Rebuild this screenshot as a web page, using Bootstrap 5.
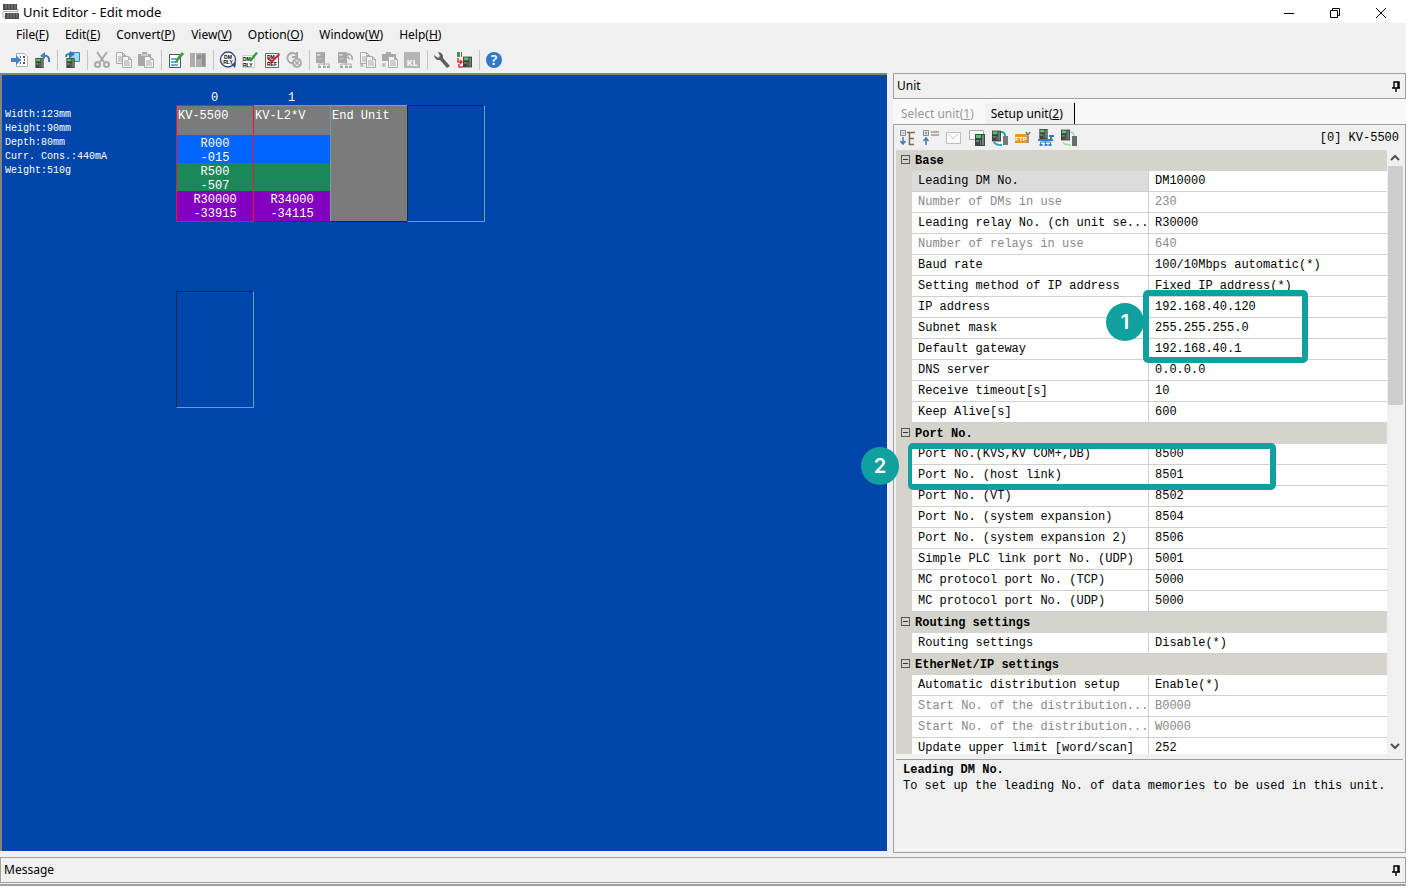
<!DOCTYPE html>
<html lang="en">
<head>
<meta charset="utf-8">
<meta name="viewport" content="width=device-width, initial-scale=1">
<title>Unit Editor - Edit mode</title>
<link href="https://cdn.jsdelivr.net/npm/bootstrap@5.3.0/dist/css/bootstrap.min.css" rel="stylesheet">
<style>
  :root { --face:#f0f0f0; --line:#a0a0a0; --group:#d4d4cc; --teal:#10a09f; --canvas:#0046aa; }
  body { font-family:"Noto Sans","Open Sans",sans-serif; font-size:12px; line-height:16px; color:#000; background:#fff; }
  button { color:inherit; }
  .mono { font-family:"Liberation Mono",monospace; font-size:12px; line-height:14px; }
  .app { padding:0 4px 2px 0; }
  .title-bar { height:23px; font-size:13px; }
  .app-icon { margin:0 3px 0 2px; }
  .win-btns { margin-right:2px; }
  .win-btn { width:46px; height:22px; border:0; background:none; padding:0; }
  .menu-bar { height:23px; background:var(--face); padding-left:8px; }
  .menu-bar a { color:#000; text-decoration:none; padding:0 8px; }
  .tool-bar { height:27px; background:var(--face); padding-left:9px; }
  .tool { width:22px; height:22px; border:0; background:none; padding:0; display:flex; align-items:center; justify-content:center; }
  .tool:disabled { opacity:1; color:#a8a8a8; }
  .tool-sep { width:8px; height:20px; display:flex; justify-content:center; }
  .tool-sep::before { content:""; width:1px; background:#c4c4c4; }
  .workspace { background:var(--face); gap:6px; }
  .unit-canvas { background:var(--canvas); border-left:2px solid #848484; border-top:2px solid #848484; color:#fff; padding:16px 0 0 3px; margin-bottom:2px; }
  .unit-info { width:171px; font-size:10px; padding-top:17px; }
  .slot { width:77px; }
  .slot-no { height:14px; text-align:center; }
  .unit { height:117px; width:78px; border:1px solid; border-color:#7a9a94 #7a9a94 #333 #7a9a94; }
  .unit-name { height:29px; padding:3px 0 0 1px; background:#7b7b7b; }
  .unit.end { background:#7b7b7b; border-color:#999 #222 #222 #6fa0a0; }
  .unit.vacant { border-color:#142a4a #5fa5b5 #5fa5b5 #142a4a; }
  .unit.picked { border-color:#f01038; position:relative; z-index:1; }
  .addr { height:28px; padding-top:2px; text-align:center; }
  .addr-in { background:#0066ff; } .addr-out { background:#1b8858; } .addr-mem { background:#8400c0; height:30px; }
  .gap-rack { margin-top:69px; margin-left:171px; }
  .side { width:513px; }
  .caption { height:26px; border:1px solid var(--line); background:var(--face); padding:0 4px 0 3px; font-size:12px; }
  .caption button { border:0; background:none; padding:0; width:9px; height:12px; display:flex; }
  .tab-strip { height:26px; background:#f8f8f8; border-bottom:1px solid var(--line); }
  .tab-strip button { border:0; background:none; height:21px; margin-top:4px; padding:0 11px 0 6px; line-height:16px; }
  .tab-strip button:first-child { color:#999; padding-left:8px; }
  .tab-strip button.active { background:var(--face); border-right:1px solid #000; }
  .side-body { border:1px solid var(--line); border-top:0; padding:0 2px 2px; }
  .side-tools { height:25px; padding:0 4px 0 0; }
  .side-tools .tool { width:23px; }
  .grid-wrap { height:604px; }
  .grid-clip { overflow:hidden; height:100%; min-width:0; background:#fff; }
  .prop-grid { width:100%; table-layout:fixed; border-collapse:separate; border-spacing:0; }
  .prop-grid tr { height:21px; }
  .prop-grid td, .prop-grid tbody th { height:21px; padding:0 0 0 6px; border-bottom:1px solid #cfcfcf; font-weight:400; white-space:nowrap; overflow:hidden; }
  .prop-grid td { border-left:1px solid #cfcfcf; background:#fff; }
  .prop-grid tbody th.gutter { background:var(--group); border:0; padding:0; }
  .prop-grid tbody .group th { background:var(--group); border:0; font-weight:700; padding:0 0 0 3px; }
  .prop-grid tbody .group th.gutter { padding:0 0 0 5px; }
  .prop-grid .off { color:#888; }
  .prop-grid .current th:nth-child(2) { background:#dcdcdc; }
  .fold { width:9px; height:9px; border:1px solid #555; background:none; padding:0; display:flex; align-items:center; justify-content:center; margin-bottom:2px; }
  .fold::before { content:""; width:5px; height:1px; background:#333; }
  .scroll-track { width:16px; background:var(--face); }
  .scroll-track button { border:0; background:none; padding:0; height:16px; display:flex; align-items:center; justify-content:center; }
  .scroll-thumb { height:239px; margin-left:1px; background:#cdcdcd; }
  .help-pane { margin-top:5px; border-top:1px solid var(--line); border-bottom:1px solid #fff; padding:2px 7px; line-height:16px; }
  .mark-box { position:absolute; border:6px solid var(--teal); border-radius:5px; pointer-events:none; }
  .mark-ip { left:247px; top:140px; width:165px; height:73px; }
  .mark-port { left:12px; top:293px; width:368px; height:47px; border-left-width:4px; }
  .mark-no { position:absolute; width:38px; height:38px; border-radius:50%; background:var(--teal); color:#fff; font:600 20px/38px Inter,sans-serif; text-align:center; }
  .no-one { left:210px; top:153px; } .no-two { left:-35px; top:297px; }
  .foot { background:var(--face); padding:4px 0 1px; border-bottom:2px solid var(--line); }
</style>
</head>
<body>
<svg class="d-none" aria-hidden="true">
  <symbol id="pin" viewBox="0 0 9 12"><path d="M2 2h5v6H2zM0 8h8M4 8v4M6 2v6" fill="none" stroke="#000" stroke-width="1.4"/></symbol>
  <symbol id="plc" viewBox="0 0 10 12"><path d="M0 0h10v12H0z" fill="#3d4541"/><path d="M1 1h5v3H1z" fill="#4ecb62"/><path d="M1 6h3v2H1zM5 6h1v5H5zM7 1h2v10H7z" fill="#778078"/></symbol>
  <symbol id="plc-off" viewBox="0 0 10 12"><path d="M0 0h10v12H0z" fill="#a6a6a6"/><path d="M1 2h4v2H1zM2 7h5v1H2z" fill="#d8d8d8"/></symbol>
  <symbol id="sheet" viewBox="0 0 10 12"><path d="M.5.5h6l3 3v8h-9zM6.500 .5v3h3M2 5h5M2 7h6M2 9h6" fill="#f4f4f4" stroke="currentColor"/></symbol>
  <symbol id="tree" viewBox="0 0 12 7"><path d="M6 0v3M1 6V3h10v3M6 3v3" fill="none" stroke="currentColor"/><path d="M0 5h3v2H0zM5 5h3v2H5zM9 5h3v2H9z" fill="currentColor"/></symbol>
</svg>

<div class="app d-flex flex-column vh-100 overflow-hidden">
  <header class="title-bar d-flex align-items-center">
    <svg width="18" height="17" viewBox="0 0 18 17" class="app-icon"><path d="M1 1h14v6H1zM3 10h14v6H3z" fill="#4b4b4b"/><path d="M4 1v5M7 1v5M10 1v5M13 1v5M6 10v5M9 10v5M12 10v5M15 10v5" stroke="#858585"/><path d="M15 6h1v3M1 9v5h2M1 8.500h15" fill="none" stroke="#aaa"/></svg>
    <span class="title-text">Unit Editor - Edit mode</span>
    <div class="win-btns ms-auto d-flex">
      <button class="win-btn" aria-label="Minimize"><svg width="12" height="12"><path d="M1 6.500h10" stroke="#000"/></svg></button>
      <button class="win-btn" aria-label="Restore"><svg width="12" height="12"><path d="M1.500 3.500h7v7h-7zM3.500 3V1.500h7v7H9" fill="none" stroke="#000"/></svg></button>
      <button class="win-btn" aria-label="Close"><svg width="12" height="12"><path d="M1 1l10 10M11 1L1 11" stroke="#000"/></svg></button>
    </div>
  </header>

  <nav class="menu-bar d-flex align-items-center" aria-label="Menu">
    <a href="#">File(<u>F</u>)</a><a href="#">Edit(<u>E</u>)</a><a href="#">Convert(<u>P</u>)</a><a href="#">View(<u>V</u>)</a><a href="#">Option(<u>O</u>)</a><a href="#">Window(<u>W</u>)</a><a href="#">Help(<u>H</u>)</a>
  </nav>

  <div class="tool-bar d-flex align-items-center" role="toolbar" aria-label="Tools">
    <button class="tool" aria-label="Import"><svg width="18" height="18"><path d="M5.500 2.500h8l3 3v10h-11z" fill="#fff" stroke="#b0b0b0"/><path d="M9 6h1M12 6h2M8 9h2M13 9h1M9 12h1M12 12h2" stroke="#555" stroke-width="2"/><path d="M0 7h5V4l5 5-5 5v-3H0z" fill="#4085c8"/></svg></button>
    <button class="tool" aria-label="Undo"><svg width="18" height="18"><use href="#plc" x="1" y="7" width="11" height="10"/><path d="M16 11c1-5-2-7-6-6" fill="none" stroke="#3d80b8" stroke-width="2"/><path d="M7 5l5-4v7z" fill="#3d80b8"/></svg></button>
    <span class="tool-sep"></span>
    <button class="tool" aria-label="Read unit"><svg width="18" height="18"><path d="M6.500 1.500h10v9h-10z" fill="#9bdcf8" stroke="#4a82a8"/><use href="#plc" x="2" y="7" width="11" height="10"/><path d="M3 6c0-3 2-3 5-3" fill="none" stroke="#2d76b8" stroke-width="2"/><path d="M7 0l5 3-5 4z" fill="#2d76b8"/></svg></button>
    <span class="tool-sep"></span>
    <button class="tool" disabled aria-label="Cut"><svg width="18" height="18" fill="none" stroke="currentColor" stroke-width="2"><path d="M4 1l7 10M14 1L7 11"/><circle cx="4.500" cy="13.500" r="2.500"/><circle cx="13.500" cy="13.500" r="2.500"/></svg></button>
    <button class="tool" disabled aria-label="Copy"><svg width="18" height="18"><use href="#sheet" x="1" y="1" width="10" height="12"/><use href="#sheet" x="7" y="5" width="10" height="12"/></svg></button>
    <button class="tool" disabled aria-label="Paste"><svg width="18" height="18"><path d="M1 3h13v12H1zM5 1h5v4H5z" fill="currentColor"/><path d="M4 4h7" stroke="#eee"/><use href="#sheet" x="7" y="5" width="10" height="12"/></svg></button>
    <span class="tool-sep"></span>
    <button class="tool" aria-label="Edit"><svg width="18" height="18"><path d="M2.500 3.500h11v13h-11z" fill="#fff" stroke="#456"/><path d="M4 8h5M4 11h7M4 14h7" stroke="#4c86c8" stroke-width="1.500"/><path d="M8 12l1-4 6-7 2 2-6 7z" fill="#35a23a"/></svg></button>
    <button class="tool" disabled aria-label="Unit"><svg width="18" height="18"><path d="M1 2h5v14H1zM7 2h10v14H7z" fill="#adadad"/><path d="M8 4h4v4H8zM13 3h3v12h-3z" fill="#8e8e8e"/></svg></button>
    <span class="tool-sep"></span>
    <button class="tool" aria-label="DM relay"><svg width="18" height="18"><circle cx="9" cy="8.500" r="7.500" fill="#fff" stroke="#344a88" stroke-width="1.400"/><path d="M12 13l5-1-1 5z" fill="#344a88"/><text x="9" y="8" font-size="5" font-weight="700" text-anchor="middle" font-family="Liberation Sans">DM</text><text x="9" y="13" font-size="5" font-weight="700" text-anchor="middle" font-family="Liberation Sans">RLY</text></svg></button>
    <button class="tool" aria-label="Assign relay"><svg width="18" height="18"><path d="M1.500 4.500h12v12h-12z" fill="#fff" stroke="#ccc"/><text x="2" y="10" font-size="5" font-weight="700" font-family="Liberation Sans">DM</text><text x="2" y="16" font-size="5" font-weight="700" font-family="Liberation Sans">RLY</text><path d="M7 8l3 3 7-9-2-1-5 6-2-1z" fill="#2e9e3a"/></svg></button>
    <button class="tool" aria-label="Check"><svg width="18" height="18"><path d="M2.500 2.500h13v14h-13z" fill="#fff" stroke="#666"/><text x="4" y="8" font-size="5" font-weight="700" font-family="Liberation Sans">DM</text><text x="4" y="15" font-size="5" font-weight="700" font-family="Liberation Sans">REF</text><path d="M5 6l4 3 7-7 1 2-8 8-5-4z" fill="#d82038"/></svg></button>
    <button class="tool" disabled aria-label="Cancel"><svg width="18" height="18" fill="none" stroke="currentColor" stroke-width="2"><path d="M12 5a5 5 0 1 0-4 7M12 1v5H7"/><circle cx="12" cy="12" r="4" fill="#eee"/><path d="M10 10l4 4M14 10l-4 4" stroke-width="1.500"/></svg></button>
    <span class="tool-sep"></span>
    <button class="tool" disabled aria-label="Unit tree"><svg width="18" height="18"><use href="#plc-off" x="1" y="1" width="9" height="11"/><use href="#tree" x="3" y="10" width="12" height="7"/></svg></button>
    <button class="tool" disabled aria-label="Undo tree"><svg width="18" height="18"><use href="#plc-off" x="1" y="1" width="9" height="11"/><use href="#tree" x="3" y="10" width="12" height="7"/><path d="M9 5c4-3 7-1 6 4M12 2L9 5l4 3" fill="none" stroke="currentColor" stroke-width="1.500"/></svg></button>
    <button class="tool" disabled aria-label="Copy comments"><svg width="18" height="18"><use href="#sheet" x="1" y="1" width="10" height="12"/><use href="#sheet" x="7" y="5" width="10" height="12"/><text x="1" y="16" font-size="6" font-weight="700" fill="currentColor">K</text></svg></button>
    <button class="tool" disabled aria-label="Paste comments"><svg width="18" height="18"><path d="M1 3h14v7H1zM5 1h5v4H5z" fill="currentColor"/><use href="#sheet" x="7" y="5" width="10" height="12"/><text x="1" y="16" font-size="6" font-weight="700" fill="currentColor">K</text></svg></button>
    <button class="tool" disabled aria-label="KL"><svg width="18" height="18"><path d="M1 1h16v16H1z" fill="#b4b4b4"/><text x="9" y="15" font-size="9" font-weight="700" text-anchor="middle" fill="#fff">KL</text></svg></button>
    <span class="tool-sep"></span>
    <button class="tool" aria-label="Settings"><svg width="18" height="18"><path d="M1 4a5 5 0 0 0 6 5l7 8 3-2-7-8a5 5 0 0 0-5-6l2 4-2 2z" fill="#606060"/></svg></button>
    <button class="tool" aria-label="Transfer"><svg width="18" height="18"><path d="M2 1h3v5H2z" fill="#2c9c55"/><path d="M6 1h1v5H6z" fill="#d33"/><path d="M3 7v4h4M5 9l2 2-2 2M4 13v3h4" fill="none" stroke="#d9363c" stroke-width="1.500"/><use href="#plc" x="8" y="5" width="9" height="12"/></svg></button>
    <span class="tool-sep"></span>
    <button class="tool" aria-label="Help"><svg width="18" height="18"><circle cx="9" cy="9" r="8" fill="#3179c4"/><text x="9" y="14" font-size="14" font-weight="600" text-anchor="middle" fill="#fff" font-family="Noto Sans">?</text></svg></button>
  </div>

  <main class="workspace d-flex flex-grow-1">
    <section class="unit-canvas mono flex-grow-1">
      <div class="d-flex">
        <div class="unit-info mono">Width:123mm<br>Height:90mm<br>Depth:80mm<br>Curr. Cons.:440mA<br>Weight:510g</div>
        <div class="slot"><div class="slot-no">0</div>
          <div class="unit picked"><div class="unit-name">KV-5500</div><div class="addr addr-in">R000<br>-015</div><div class="addr addr-out">R500<br>-507</div><div class="addr addr-mem">R30000<br>-33915</div></div></div>
        <div class="slot"><div class="slot-no">1</div>
          <div class="unit"><div class="unit-name">KV-L2*V</div><div class="addr addr-in"></div><div class="addr addr-out"></div><div class="addr addr-mem">R34000<br>-34115</div></div></div>
        <div class="slot"><div class="slot-no"></div><div class="unit end"><div class="unit-name">End Unit</div></div></div>
        <div class="slot"><div class="slot-no"></div><div class="unit vacant"></div></div>
      </div>
      <div class="gap-rack"><div class="unit vacant"></div></div>
    </section>

    <aside class="side d-flex flex-column flex-shrink-0">
      <div class="caption d-flex align-items-center justify-content-between"><span>Unit</span><button aria-label="Auto hide"><svg width="9" height="12"><use href="#pin"/></svg></button></div>
      <div class="tab-strip d-flex" role="tablist">
        <button role="tab">Select unit(<u>1</u>)</button><button role="tab" class="active" aria-selected="true">Setup unit(<u>2</u>)</button>
      </div>
      <div class="side-body d-flex flex-column flex-grow-1">
        <div class="side-tools d-flex align-items-center">
          <button class="tool" aria-label="Expand all"><svg width="18" height="18" fill="none"><path d="M1.500 1.500h5v5h-5zM2.500 4h3" stroke="#888"/><path d="M8 3.500h8M10.500 4v12M10.500 9.500H15M10.500 15.500H15" stroke="#7b694c" stroke-width="1.500"/><path d="M4 8v7M1.500 12L4 15l2.500-3" stroke="#3e7eb5" stroke-width="1.500"/></svg></button>
          <button class="tool" aria-label="Collapse all"><svg width="18" height="18" fill="none"><path d="M1.500 1.500h5v5h-5zM2.500 4h3M4 2.500v3" stroke="#888"/><path d="M9 3h8M9 6h8" stroke="#7b694c"/><path d="M4 16V9M1.500 12L4 9l2.500 3" stroke="#3e7eb5" stroke-width="1.500"/></svg></button>
          <button class="tool" aria-label="Mail"><svg width="16" height="14"><path d="M.5 1.500h14v11H.5z" fill="#fafafa" stroke="#bbb"/><path d="M3 3l4 5 5-5" fill="none" stroke="#ccc"/></svg></button>
          <button class="tool" aria-label="Mail setup"><svg width="18" height="18"><path d="M1.500 1.500h14v9h-14z" fill="#fafafa" stroke="#aaa"/><use href="#plc" x="7" y="5" width="10" height="12"/></svg></button>
          <button class="tool" aria-label="Transfer setup"><svg width="18" height="18"><use href="#plc" x="1" y="1" width="9" height="12"/><path d="M10 3c3 0 4 1 4 4M3 13c1 3 4 3 8 3" fill="none" stroke="#22a5c0" stroke-width="2"/><path d="M12 7h5v9h-5z" fill="#77777c"/></svg></button>
          <button class="tool" aria-label="FTP setup"><svg width="18" height="18"><path d="M1 5h12v9H1z" fill="#e39a27"/><text x="7" y="12" font-size="6" font-weight="700" text-anchor="middle" fill="#fff" font-family="Liberation Sans">FTP</text><path d="M14 14V7M12 3l2 3 2-3" fill="none" stroke="#777" stroke-width="1.500"/></svg></button>
          <button class="tool" aria-label="Network setup"><svg width="18" height="18"><use href="#plc" x="2" y="0" width="9" height="10"/><g color="#367fbd"><use href="#tree" x="1" y="10" width="15" height="7"/></g><path d="M12 7h5M14 7v5M1 11h15" stroke="#367fbd" stroke-width="2"/></svg></button>
          <button class="tool" aria-label="Link setup"><svg width="18" height="18"><use href="#plc" x="1" y="0" width="9" height="12"/><path d="M10 3c3 0 4 1 4 4M3 13c1 3 4 3 8 3" fill="none" stroke="#a4dba0" stroke-width="1.500"/><path d="M12 7h5v10h-5z" fill="#66706b"/></svg></button>
          <span class="mono ms-auto">[0] KV-5500</span>
        </div>

        <div class="grid-wrap d-flex position-relative">
          <div class="grid-clip flex-grow-1">
            <table class="prop-grid mono">
              <colgroup><col style="width:16px"><col style="width:236px"><col></colgroup>
              <tbody>
                <tr class="group"><th class="gutter"><button class="fold" aria-label="Collapse Base"></button></th><th colspan="2">Base</th></tr>
                <tr class="current"><th class="gutter"></th><th scope="row">Leading DM No.</th><td>DM10000</td></tr>
                <tr class="off"><th class="gutter"></th><th scope="row">Number of DMs in use</th><td>230</td></tr>
                <tr><th class="gutter"></th><th scope="row">Leading relay No. (ch unit se...</th><td>R30000</td></tr>
                <tr class="off"><th class="gutter"></th><th scope="row">Number of relays in use</th><td>640</td></tr>
                <tr><th class="gutter"></th><th scope="row">Baud rate</th><td>100/10Mbps automatic(*)</td></tr>
                <tr><th class="gutter"></th><th scope="row">Setting method of IP address</th><td>Fixed IP address(*)</td></tr>
                <tr><th class="gutter"></th><th scope="row">IP address</th><td>192.168.40.120</td></tr>
                <tr><th class="gutter"></th><th scope="row">Subnet mask</th><td>255.255.255.0</td></tr>
                <tr><th class="gutter"></th><th scope="row">Default gateway</th><td>192.168.40.1</td></tr>
                <tr><th class="gutter"></th><th scope="row">DNS server</th><td>0.0.0.0</td></tr>
                <tr><th class="gutter"></th><th scope="row">Receive timeout[s]</th><td>10</td></tr>
                <tr><th class="gutter"></th><th scope="row">Keep Alive[s]</th><td>600</td></tr>
                <tr class="group"><th class="gutter"><button class="fold" aria-label="Collapse Port No."></button></th><th colspan="2">Port No.</th></tr>
                <tr><th class="gutter"></th><th scope="row">Port No.(KVS,KV COM+,DB)</th><td>8500</td></tr>
                <tr><th class="gutter"></th><th scope="row">Port No. (host link)</th><td>8501</td></tr>
                <tr><th class="gutter"></th><th scope="row">Port No. (VT)</th><td>8502</td></tr>
                <tr><th class="gutter"></th><th scope="row">Port No. (system expansion)</th><td>8504</td></tr>
                <tr><th class="gutter"></th><th scope="row">Port No. (system expansion 2)</th><td>8506</td></tr>
                <tr><th class="gutter"></th><th scope="row">Simple PLC link port No. (UDP)</th><td>5001</td></tr>
                <tr><th class="gutter"></th><th scope="row">MC protocol port No. (TCP)</th><td>5000</td></tr>
                <tr><th class="gutter"></th><th scope="row">MC protocol port No. (UDP)</th><td>5000</td></tr>
                <tr class="group"><th class="gutter"><button class="fold" aria-label="Collapse Routing settings"></button></th><th colspan="2">Routing settings</th></tr>
                <tr><th class="gutter"></th><th scope="row">Routing settings</th><td>Disable(*)</td></tr>
                <tr class="group"><th class="gutter"><button class="fold" aria-label="Collapse EtherNet/IP settings"></button></th><th colspan="2">EtherNet/IP settings</th></tr>
                <tr><th class="gutter"></th><th scope="row">Automatic distribution setup</th><td>Enable(*)</td></tr>
                <tr class="off"><th class="gutter"></th><th scope="row">Start No. of the distribution...</th><td>B0000</td></tr>
                <tr class="off"><th class="gutter"></th><th scope="row">Start No. of the distribution...</th><td>W0000</td></tr>
                <tr><th class="gutter"></th><th scope="row">Update upper limit [word/scan]</th><td>252</td></tr>
              </tbody>
            </table>
          </div>
          <div class="scroll-track d-flex flex-column flex-shrink-0">
            <button aria-label="Scroll up"><svg width="10" height="8"><path d="M1 6l4-4 4 4" fill="none" stroke="#505050" stroke-width="2"/></svg></button>
            <div class="scroll-thumb"></div>
            <button class="mt-auto" aria-label="Scroll down"><svg width="10" height="8"><path d="M1 2l4 4 4-4" fill="none" stroke="#505050" stroke-width="2"/></svg></button>
          </div>
          <div class="mark-box mark-ip"></div><div class="mark-no no-one">1</div>
          <div class="mark-box mark-port"></div><div class="mark-no no-two">2</div>
        </div>
        <div class="help-pane mono flex-grow-1"><strong>Leading DM No.</strong><br>To set up the leading No. of data memories to be used in this unit.</div>
      </div>
    </aside>
  </main>

  <footer class="foot">
    <div class="caption d-flex align-items-center justify-content-between"><span>Message</span><button aria-label="Auto hide"><svg width="9" height="12"><use href="#pin"/></svg></button></div>
  </footer>
</div>
<script src="https://cdn.jsdelivr.net/npm/bootstrap@5.3.0/dist/js/bootstrap.bundle.min.js"></script>
</body>
</html>
